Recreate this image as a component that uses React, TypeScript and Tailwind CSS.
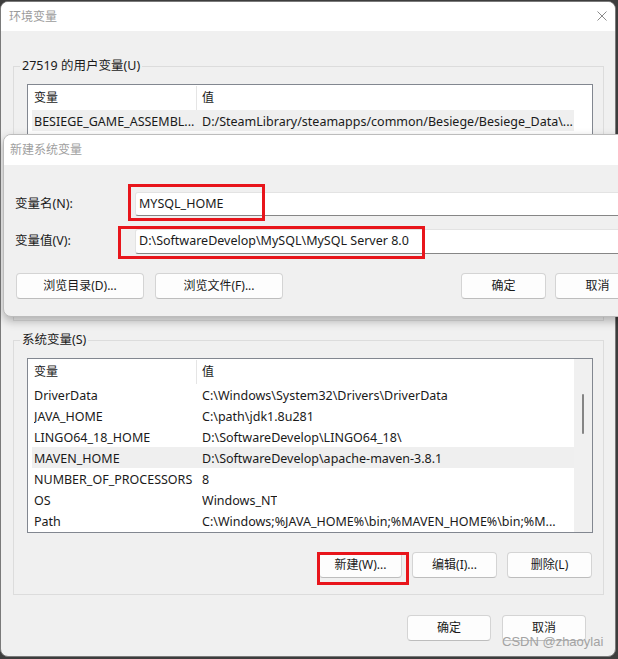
import React from "react";

function Btn({ children, className }: { children: React.ReactNode; className: string }) {
  return (
    <div
      className={`h-[26px] flex items-center justify-center bg-[#fdfdfd] border border-[#d4d4d4] border-b-[#bdbdbd] rounded-[4px] text-[12px] text-[#1a1a1a] ${className}`}
    >
      {children}
    </div>
  );
}

type Row = [string, string];

function VarList({ rows, selected, scroll }: { rows: Row[]; selected: number; scroll: boolean }) {
  return (
    <div className="h-[175px] border border-[#828790] bg-white flex">
      <div className="flex-1 flex flex-col min-w-0">
        <div className="h-[25px] flex items-center shrink-0">
          <div className="w-[168px] pl-[6px] text-[12px]">变量</div>
          <div className="w-px h-[24px] bg-[#e5e5e5]" />
          <div className="pl-[5px] text-[12px]">值</div>
        </div>
        {rows.map((r, i) => (
          <div
            key={i}
            className={`h-[21px] ml-[4px] pl-[2px] pt-[3px] flex items-center shrink-0 text-[12.5px] whitespace-nowrap overflow-hidden ${
              i === selected ? "bg-[#efefef]" : ""
            }`}
          >
            <div className="w-[168px] shrink-0 overflow-hidden">{r[0]}</div>
            <div className="overflow-hidden">{r[1]}</div>
          </div>
        ))}
      </div>
      {scroll ? (
        <div className="w-[18px] bg-[#f0f0f0] flex justify-center pt-[35px]">
          <div className="w-[2px] h-[40px] rounded-full bg-[#858585]" />
        </div>
      ) : (
        <div className="w-[18px] bg-white" />
      )}
    </div>
  );
}

export default function App() {
  const sysRows: Row[] = [
    ["DriverData", "C:\\Windows\\System32\\Drivers\\DriverData"],
    ["JAVA_HOME", "C:\\path\\jdk1.8u281"],
    ["LINGO64_18_HOME", "D:\\SoftwareDevelop\\LINGO64_18\\"],
    ["MAVEN_HOME", "D:\\SoftwareDevelop\\apache-maven-3.8.1"],
    ["NUMBER_OF_PROCESSORS", "8"],
    ["OS", "Windows_NT"],
    ["Path", "C:\\Windows;%JAVA_HOME%\\bin;%MAVEN_HOME%\\bin;%M..."],
  ];
  const userRows: Row[] = [
    ["BESIEGE_GAME_ASSEMBL...", "D:/SteamLibrary/steamapps/common/Besiege/Besiege_Data\\..."],
  ];

  return (
    <div className="relative w-[618px] h-[659px] overflow-hidden bg-[#3d3d3d] pt-px font-['Noto_Sans','Noto_Sans_CJK_SC',sans-serif] text-[#1a1a1a]">
      {/* Main window */}
      <div className="w-[616px] h-[656px] bg-[#f0f0f0] border border-[#7a7a7a] rounded-[8px] overflow-hidden flex flex-col">
        <div className="h-[29px] bg-white flex items-center justify-between pl-[8px] pr-[8px] shrink-0">
          <span className="text-[12px] text-[#9b9b9b]">环境变量</span>
          <svg width="10" height="10" viewBox="0 0 10 10" className="mb-[2px]">
            <path d="M0.5 0.5 L9.5 9.5 M9.5 0.5 L0.5 9.5" stroke="#8a8a8a" strokeWidth="1" />
          </svg>
        </div>
        <div className="flex flex-col pt-[27px] pl-[12px] pr-[11px]">
          <fieldset className="h-[263px] border border-[#dcdcdc] px-0">
            <legend className="ml-[6px] px-[2px] text-[12.5px] leading-[16px]">27519 的用户变量(U)</legend>
            <div className="pt-[10px] pl-[13px] pr-[10px]">
              <VarList rows={userRows} selected={0} scroll={false} />
              <div className="flex justify-end gap-[10px] mt-[19px] pr-[1px]">
                <Btn className="w-[83px]">新建(N)...</Btn>
                <Btn className="w-[85px]">编辑(E)...</Btn>
                <Btn className="w-[85px]">删除(D)</Btn>
              </div>
            </div>
          </fieldset>
          <fieldset className="h-[263px] mt-[11px] border border-[#dcdcdc] px-0">
            <legend className="ml-[6px] px-[2px] text-[12.5px] leading-[16px]">系统变量(S)</legend>
            <div className="pt-[10px] pl-[13px] pr-[10px]">
              <VarList rows={sysRows} selected={3} scroll={true} />
              <div className="flex justify-end gap-[10px] mt-[19px] pr-[1px]">
                <Btn className="w-[83px]">新建(W)...</Btn>
                <Btn className="w-[85px]">编辑(I)...</Btn>
                <Btn className="w-[85px]">删除(L)</Btn>
              </div>
            </div>
          </fieldset>
          <div className="flex justify-end gap-[11px] mt-[20px] pr-[18px]">
            <Btn className="w-[84px]">确定</Btn>
            <Btn className="w-[84px]">取消</Btn>
          </div>
        </div>
      </div>

      {/* New system variable dialog */}
      <div className="absolute left-[3px] top-[134px] w-[680px] h-[183px] bg-[#f0f0f0] border border-[#bcbcbc] rounded-[8px] overflow-hidden shadow-[0_4px_10px_rgba(0,0,0,0.28)] flex flex-col">
        <div className="h-[30px] bg-white flex items-center pl-[6px] shrink-0">
          <span className="text-[12px] text-[#a0a0a0]">新建系统变量</span>
        </div>
        <div className="flex flex-col pt-[27px]">
          <div className="flex items-center h-[24px]">
            <div className="w-[131px] pl-[11px] text-[12.5px]">变量名(N):</div>
            <div className="w-[520px] h-[24px] bg-white border border-[#e3e3e3] border-b-[#868686] rounded-[3px] flex items-center pl-[3px] text-[12.5px]">
              MYSQL_HOME
            </div>
          </div>
          <div className="flex items-center h-[25px] mt-[13px]">
            <div className="w-[131px] pl-[11px] text-[12.5px]">变量值(V):</div>
            <div className="w-[520px] h-[25px] bg-white border border-[#e3e3e3] border-b-[#868686] rounded-[3px] flex items-center pl-[3px] text-[12.5px]">
              D:\SoftwareDevelop\MySQL\MySQL Server 8.0
            </div>
          </div>
          <div className="flex items-center mt-[19px] pl-[12px]">
            <Btn className="w-[128px]">浏览目录(D)...</Btn>
            <Btn className="w-[128px] ml-[11px]">浏览文件(F)...</Btn>
            <Btn className="w-[85px] ml-[178px]">确定</Btn>
            <Btn className="w-[85px] ml-[9px]">取消</Btn>
          </div>
        </div>
      </div>

      {/* Red annotation boxes */}
      <div className="absolute left-[128px] top-[184px] w-[137px] h-[37px] border-[3px] border-[#e8151b]" />
      <div className="absolute left-[118px] top-[226px] w-[307px] h-[33px] border-[3px] border-[#e8151b]" />
      <div className="absolute left-[317px] top-[552px] w-[92px] h-[33px] border-[3px] border-[#e8151b]" />

      {/* Watermark */}
      <div className="absolute left-[502px] top-[633px] text-[13px] leading-[18px] text-[#a3a3a3] font-['Liberation_Sans',sans-serif]">
        CSDN @zhaoylai
      </div>
    </div>
  );
}
